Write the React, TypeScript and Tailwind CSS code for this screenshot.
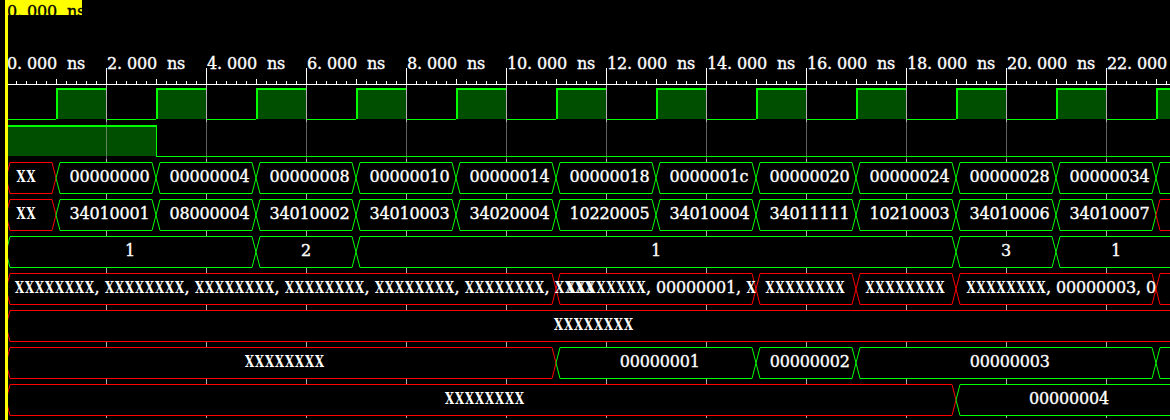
import React from "react";

const FONT = '"DejaVu Serif", "Liberation Serif", serif';
const GREEN = "#00ff00";
const RED = "#ff0000";
const FILL = "#004e00";
const GRID = "#b0b0b0";
const W = 1170;
const ROW_H = 37;

// 0 ns sits at x=6, 50px per ns
const px = (ns: number) => 6 + 50 * ns;

type Seg = { x0: number; x1: number; color: string; text?: string; tx?: number };

const pcVals = ["00000000", "00000004", "00000008", "00000010", "00000014", "00000018", "0000001c", "00000020", "00000024", "00000028", "00000034"];
const instrVals = ["34010001", "08000004", "34010002", "34010003", "34020004", "10220005", "34010004", "34011111", "10210003", "34010006", "34010007"];

const clocked = (vals: string[], tail: string): Seg[] => [
  { x0: 6, x1: 56, color: RED, text: "XX", tx: 16 },
  ...vals.map((v, k) => ({ x0: px(1 + 2 * k), x1: px(3 + 2 * k), color: GREEN, text: v, tx: 69.5 + 100 * k })),
  { x0: 1156, x1: 1200, color: tail },
];

const busRows: Seg[][] = [
  clocked(pcVals, GREEN),
  clocked(instrVals, RED),
  [
    { x0: 6, x1: 256, color: GREEN, text: "1", tx: 125 },
    { x0: 256, x1: 356, color: GREEN, text: "2", tx: 301 },
    { x0: 356, x1: 956, color: GREEN, text: "1", tx: 651 },
    { x0: 956, x1: 1056, color: GREEN, text: "3", tx: 1001 },
    { x0: 1056, x1: 1200, color: GREEN, text: "1", tx: 1111 },
  ],
  [
    { x0: 6, x1: 556, color: RED, text: "XXXXXXXX,".repeat(6) + "XXXX", tx: 14.5 },
    { x0: 556, x1: 756, color: RED, text: "XXXXXXXX,00000001,X", tx: 566 },
    { x0: 756, x1: 856, color: RED, text: "XXXXXXXX", tx: 765 },
    { x0: 856, x1: 956, color: RED, text: "XXXXXXXX", tx: 865 },
    { x0: 956, x1: 1156, color: RED, text: "XXXXXXXX,00000003,0", tx: 966 },
    { x0: 1156, x1: 1200, color: RED },
  ],
  [{ x0: 6, x1: 1200, color: RED, text: "XXXXXXXX", tx: 553.5 }],
  [
    { x0: 6, x1: 556, color: RED, text: "XXXXXXXX", tx: 244.5 },
    { x0: 556, x1: 756, color: GREEN, text: "00000001", tx: 619.7 },
    { x0: 756, x1: 856, color: GREEN, text: "00000002", tx: 769.7 },
    { x0: 856, x1: 1156, color: GREEN, text: "00000003", tx: 969.7 },
    { x0: 1156, x1: 1200, color: GREEN },
  ],
  [
    { x0: 6, x1: 956, color: RED, text: "XXXXXXXX", tx: 444.5 },
    { x0: 956, x1: 1200, color: GREEN, text: "00000004", tx: 1029 },
  ],
];

const gridXs = Array.from({ length: 11 }, (_, k) => 106 + 100 * k);

// monospaced 10px cells, like the bitmap font of the viewer
function Mono({ s, x, y, fill = "#fff" }: { s: string; x: number; y: number; fill?: string }) {
  return (
    <g fill={fill} fontFamily={FONT} fontSize={16}>
      {Array.from(s).map((ch, i) =>
        ch === " " ? null : ch === "X" ? (
          <text key={i} x={x + i * 10 + 0.5} y={y} fontWeight={700} textLength={9} lengthAdjust="spacingAndGlyphs">
            X
          </text>
        ) : (
          <text key={i} x={x + i * 10} y={y} stroke={fill} strokeWidth={0.35}>
            {ch}
          </text>
        )
      )}
    </g>
  );
}

function Grid({ opacity = 1 }: { opacity?: number }) {
  return (
    <g fill={GRID} opacity={opacity}>
      {gridXs.map((x) => (
        <rect key={x} x={x} y={0} width={1} height={ROW_H} />
      ))}
    </g>
  );
}

function Ruler() {
  const ticks = [];
  for (let x = 16; x < W; x += 10) {
    const off = (x - 6) % 100;
    if (off === 0) continue;
    const top = off === 50 ? 79 : 81;
    ticks.push(<rect key={x} x={x} y={top} width={1} height={84 - top} fill="#fff" />);
  }
  return (
    <svg width={W} height={85} className="block">
      <rect x={5} y={0} width={77} height={15} fill="#ffff00" />
      <Mono s="0.000 ns" x={7} y={17} fill="#000" />
      <rect x={6} y={84} width={W} height={1} fill="#fff" />
      {ticks}
      {gridXs.map((x) => (
        <rect key={x} x={x} y={68} width={1} height={16} fill="#fff" />
      ))}
      {Array.from({ length: 12 }, (_, k) => (
        <Mono key={k} s={`${2 * k}.000 ns`} x={7 + 100 * k} y={69.3} />
      ))}
    </svg>
  );
}

function ClockRow() {
  const pulses = Array.from({ length: 12 }, (_, k) => 56 + 100 * k);
  return (
    <svg width={W} height={ROW_H} className="block">
      {pulses.map((x) => (
        <g key={x}>
          <rect x={x} y={3} width={50} height={31} fill={FILL} />
          <rect x={x} y={3} width={50} height={2} fill={GREEN} />
          <rect x={x} y={3} width={2} height={31} fill={GREEN} />
          <rect x={x + 50} y={3} width={1} height={32} fill={GREEN} />
          <rect x={x - 50} y={34} width={50} height={1} fill={GREEN} />
        </g>
      ))}
      <Grid />
    </svg>
  );
}

function ResetRow() {
  return (
    <svg width={W} height={ROW_H} className="block">
      <rect x={6} y={3} width={150} height={31} fill={FILL} />
      <Grid opacity={0.55} />
      <rect x={6} y={3} width={150} height={2} fill={GREEN} />
      <rect x={156} y={3} width={1} height={32} fill={GREEN} />
      <rect x={156} y={34} width={W} height={1} fill={GREEN} />
    </svg>
  );
}

function BusRow({ segs }: { segs: Seg[] }) {
  const T = 3.5;
  const B = 34.5;
  const M = 19;
  return (
    <svg width={W} height={ROW_H} className="block">
      <Grid />
      {segs.map((s, i) => (
        <polygon
          key={i}
          points={`${s.x0},${M} ${s.x0 + 4},${T} ${s.x1 - 4},${T} ${s.x1},${M} ${s.x1 - 4},${B} ${s.x0 + 4},${B}`}
          fill="#000"
          stroke={s.color}
          strokeWidth={1}
        />
      ))}
      {segs.map((s, i) => (s.text ? <Mono key={i} s={s.text} x={s.tx ?? s.x0 + 8} y={22.8} /> : null))}
    </svg>
  );
}

export default function App() {
  return (
    <div className="relative w-[1170px] h-[420px] overflow-hidden bg-black flex flex-col">
      <Ruler />
      <ClockRow />
      <ResetRow />
      {busRows.map((segs, i) => (
        <BusRow key={i} segs={segs} />
      ))}
      <div className="absolute left-[5px] top-0 w-[3px] h-full bg-[#ffff00]" />
    </div>
  );
}
